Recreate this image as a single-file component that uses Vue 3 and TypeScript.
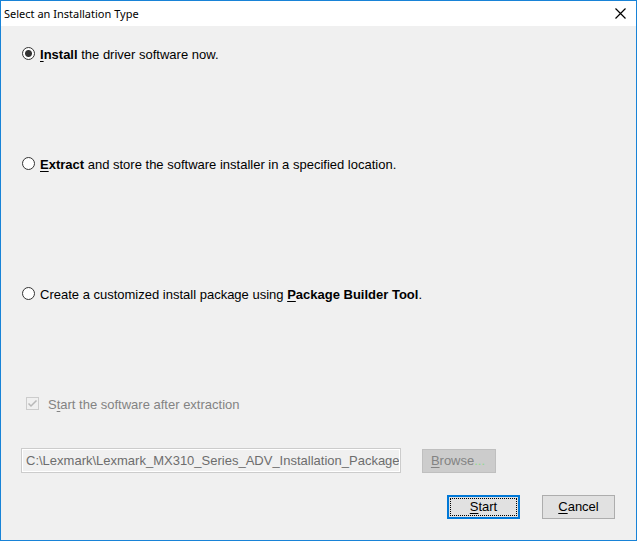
<script setup lang="ts">
import { ref } from 'vue'

type InstallType = 'install' | 'extract' | 'custom'

const selected = ref<InstallType>('install')
const startAfter = ref(true)
const path = ref('C:\\Lexmark\\Lexmark_MX310_Series_ADV_Installation_Package')
</script>

<template>
  <main class="dialog">
    <header class="titlebar">
      <h1 class="title">Select an Installation Type</h1>
      <button class="close" type="button" aria-label="Close">
        <svg width="11" height="11" viewBox="0 0 11 11" aria-hidden="true">
          <path d="M0.5 0.5L10.5 10.5M10.5 0.5L0.5 10.5" fill="none" stroke="#000" stroke-width="1.2" />
        </svg>
      </button>
    </header>

    <form class="content" @submit.prevent>
      <div class="choices">
        <label class="choice">
          <input v-model="selected" class="radio" type="radio" name="type" value="install" />
          <span><b><u>I</u>nstall</b> the driver software now.</span>
        </label>
        <label class="choice">
          <input v-model="selected" class="radio" type="radio" name="type" value="extract" />
          <span><b><u>E</u>xtract</b> and store the software installer in a specified location.</span>
        </label>
        <label class="choice last">
          <input v-model="selected" class="radio" type="radio" name="type" value="custom" />
          <span>Create a customized install package using <b><u>P</u>ackage Builder Tool</b>.</span>
        </label>
      </div>

      <label class="after">
        <span class="check">
          <input v-model="startAfter" class="box" type="checkbox" :disabled="selected !== 'extract'" />
          <svg class="tick" width="13" height="13" viewBox="0 0 13 13" aria-hidden="true">
            <path d="M2.5 6.5L5 9L10.5 3.5" fill="none" stroke="#b8b8b8" stroke-width="1.5" />
          </svg>
        </span>
        <span>S<u>t</u>art the software after extraction</span>
      </label>

      <div class="location">
        <input v-model="path" class="path" type="text" aria-label="Extraction folder" :disabled="selected !== 'extract'" />
        <button class="button browse" type="button" :disabled="selected !== 'extract'"><span><u>B</u>rowse<span class="dots">...</span></span></button>
      </div>

      <footer class="actions">
        <button class="button start" type="submit"><span class="focus"><span><u>S</u>tart</span></span></button>
        <button class="button" type="button"><span><u>C</u>ancel</span></button>
      </footer>
    </form>
  </main>
</template>

<style>
body {
  margin: 0;
}
</style>

<style scoped>
.dialog {
  box-sizing: border-box;
  min-height: 100vh;
  border: 1px solid #1883d7;
  background: #f0f0f0;
  color: #000;
  font: 13px/20px "Liberation Sans", Arial, sans-serif;
}
.titlebar {
  display: flex;
  align-items: center;
  justify-content: space-between;
  height: 25px;
  padding: 0 10px 0 3px;
  background: #fff;
}
.title {
  margin: 0;
  font: 11px/24px "Noto Sans", "Segoe UI", sans-serif;
}
.close {
  display: flex;
  padding: 0;
  border: 0;
  background: none;
}
u {
  text-decoration: underline;
  text-decoration-thickness: 1px;
  text-underline-offset: 2px;
  text-decoration-skip-ink: none;
}
.content {
  padding: 19px 21px 16px 20px;
}
.choices {
  display: flex;
  flex-direction: column;
  gap: 90px;
}
.choice {
  display: flex;
  align-items: center;
  gap: 5px;
  padding-left: 1px;
}
.choice.last {
  margin-top: 20px;
}
.radio {
  appearance: none;
  box-sizing: border-box;
  flex: none;
  width: 13px;
  height: 13px;
  margin: 0 0 4px;
  border: 1px solid #333;
  border-radius: 50%;
  background: #fff;
}
.radio:checked {
  background: radial-gradient(circle, #333 3px, #fff 4px);
}
.after {
  display: flex;
  align-items: center;
  gap: 9px;
  margin-top: 90px;
  padding-left: 5px;
  color: #838383;
}
.check {
  display: grid;
  margin-bottom: 4px;
}
.check > * {
  grid-area: 1 / 1;
}
.box {
  appearance: none;
  box-sizing: border-box;
  width: 13px;
  height: 13px;
  margin: 0;
  border: 1px solid #ccc;
}
.tick {
  visibility: hidden;
  pointer-events: none;
}
.box:checked + .tick {
  visibility: visible;
}
.location {
  display: flex;
  align-items: center;
  gap: 21px;
  margin-top: 33px;
}
.path {
  box-sizing: border-box;
  flex: 0 1 380px;
  min-width: 0;
  height: 25px;
  padding: 0 0 1px 4px;
  border: 1px solid #ccc;
  outline: 1px solid #fff;
  outline-offset: -2px;
  background: #f0f0f0;
  color: #6d6d6d;
  font: inherit;
}
.button {
  box-sizing: border-box;
  width: 73px;
  height: 24px;
  padding: 0;
  border: 1px solid #adadad;
  background: #e1e1e1;
  color: #000;
  font: inherit;
  line-height: 20px;
}
.browse {
  width: 74px;
  padding-right: 2px;
  border-color: #bfbfbf;
  background: #ccc;
  color: #838383;
}
.dots {
  color: #90d890;
}
.actions {
  display: flex;
  justify-content: flex-end;
  gap: 22px;
  margin-top: 22px;
}
.start {
  border: 2px solid #0078d7;
}
.focus {
  display: block;
  margin: 1px;
  border: 1px dotted #000;
  line-height: 16px;
}
</style>
